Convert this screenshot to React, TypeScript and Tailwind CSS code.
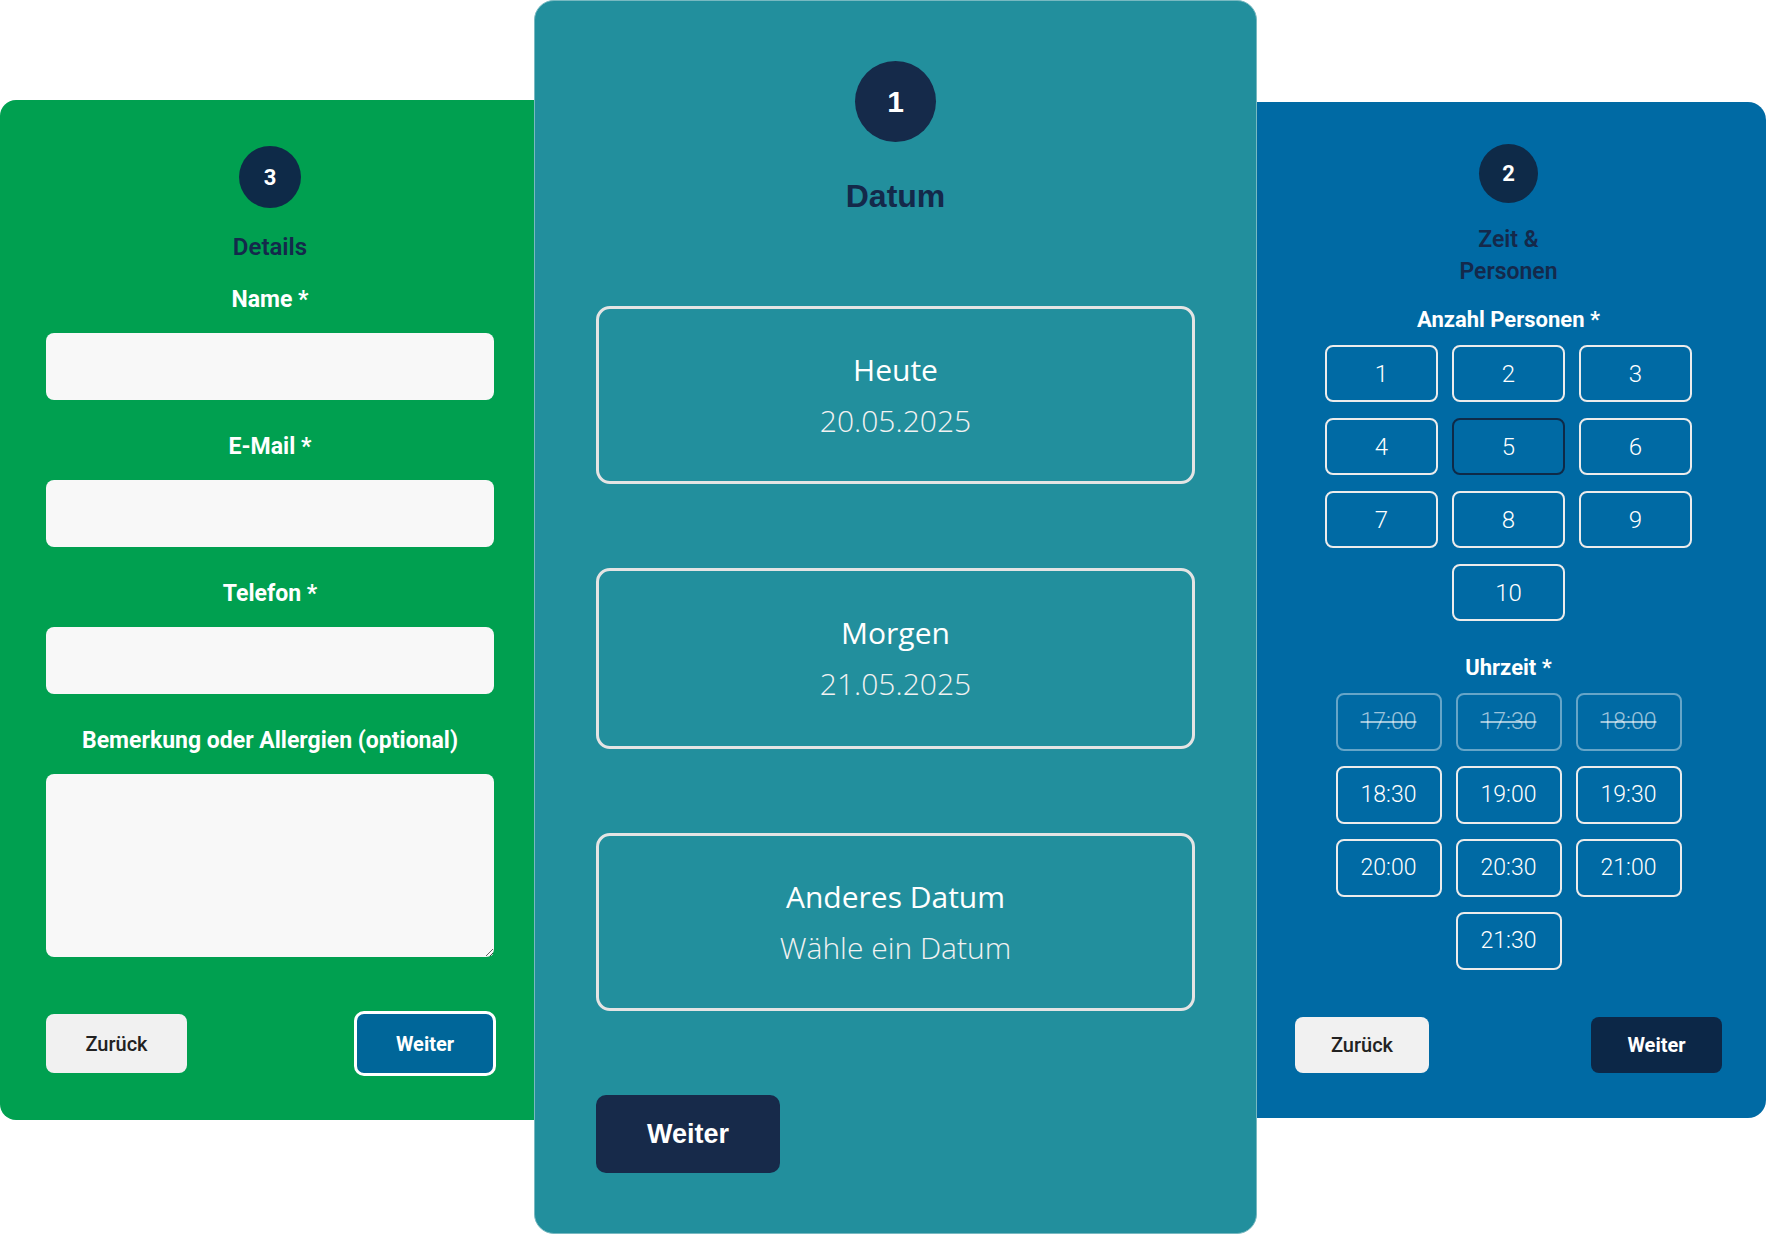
import React from 'react';

const roboto = { fontFamily: 'Roboto, "Liberation Sans", sans-serif' };

const people = [1, 2, 3, 4, 5, 6, 7, 8, 9, 10];
const times = [
  { t: '17:00', off: true },
  { t: '17:30', off: true },
  { t: '18:00', off: true },
  { t: '18:30' },
  { t: '19:00' },
  { t: '19:30' },
  { t: '20:00' },
  { t: '20:30' },
  { t: '21:00' },
  { t: '21:30' },
];

const Field = ({ label, area }: { label: string; area?: boolean }) => (
  <>
    <div className="mt-[33px] h-[28px] leading-[28px] text-[23px] font-bold text-white">{label}</div>
    {area ? (
      <textarea className="mt-[19px] h-[183px] w-full shrink-0 rounded-[8px] bg-[#f8f8f8] outline-none" />
    ) : (
      <input className="mt-[19px] h-[67px] w-full shrink-0 rounded-[8px] bg-[#f8f8f8] outline-none" />
    )}
  </>
);

const DetailsCard = () => (
  <div
    className="mt-[100px] flex h-[1020px] w-[540px] shrink-0 flex-col items-center rounded-l-[16px] bg-[#00a050] px-[46px]"
    style={roboto}
  >
    <div className="mt-[46px] flex h-[62px] w-[62px] items-center justify-center rounded-full bg-[#0e2a48] text-[22px] font-bold text-white">
      3
    </div>
    <div className="mt-[24px] h-[30px] leading-[30px] text-[24px] font-semibold text-[#14294b]">Details</div>
    <div className="-mt-[9px]" />
    <Field label="Name *" />
    <Field label="E-Mail *" />
    <Field label="Telefon *" />
    <Field label="Bemerkung oder Allergien (optional)" area />
    <div className="mt-[54px] flex w-full items-center justify-between pr-[1px]">
      <button className="h-[59px] w-[141px] rounded-[8px] bg-[#f1f1f1] text-[20px] font-medium text-[#222]">
        Zurück
      </button>
      <button className="-mr-[3px] h-[65px] w-[142px] rounded-[10px] border-[3px] border-white bg-[#006699] text-[20px] font-bold text-white">
        Weiter
      </button>
    </div>
  </div>
);

const DateOption = ({ title, sub, tall }: { title: string; sub: string; tall?: boolean }) => (
  <button
    className={`flex w-full shrink-0 flex-col items-center justify-center gap-[11px] rounded-[14px] border-[3px] border-[#e4e4e4] ${
      tall ? 'h-[181px]' : 'h-[178px]'
    }`}
    style={{ fontFamily: '"Open Sans", "Noto Sans", sans-serif' }}
  >
    <span className="leading-[40px] text-[30px] text-white">{title}</span>
    <span className="leading-[40px] text-[30px] font-light text-[#f2f2f2]">{sub}</span>
  </button>
);

const DateCard = () => (
  <div
    className="relative z-10 -ml-[6px] flex h-[1234px] w-[723px] shrink-0 flex-col rounded-[20px] border border-[#78b9c1] bg-[#228f9d] px-[61px]"
    style={{ fontFamily: '"Liberation Sans", Arial, sans-serif' }}
  >
    <div className="mx-auto mt-[60px] flex h-[81px] w-[81px] items-center justify-center rounded-full bg-[#152a4a] text-[30px] font-bold text-white">
      1
    </div>
    <div className="mt-[36px] h-[36px] text-center leading-[36px] text-[32px] font-bold text-[#14294a]">Datum</div>
    <div className="mt-[92px] flex flex-col gap-[84px]">
      <DateOption title="Heute" sub="20.05.2025" />
      <DateOption title="Morgen" sub="21.05.2025" tall />
      <DateOption title="Anderes Datum" sub="Wähle ein Datum" />
    </div>
    <button className="mt-[84px] h-[78px] w-[184px] rounded-[10px] bg-[#172a4a] text-[27px] font-bold text-white">
      Weiter
    </button>
  </div>
);

const TimeCard = () => (
  <div
    className="-ml-[6px] mt-[102px] flex h-[1016px] w-[515px] shrink-0 flex-col items-center rounded-r-[18px] bg-[#006aa4] px-[44px]"
    style={roboto}
  >
    <div className="mt-[42px] flex h-[59px] w-[59px] items-center justify-center rounded-full bg-[#0e2a48] text-[22px] font-bold text-white">
      2
    </div>
    <div className="mt-[21px] w-[120px] text-center leading-[32px] text-[23px] font-semibold text-[#14294b]">
      Zeit & Personen
    </div>
    <div className="mt-[18px] h-[28px] leading-[28px] text-[22px] font-bold text-white">Anzahl Personen *</div>
    <div className="mt-[11px] grid grid-cols-[113px_113px_113px] gap-x-[14px] gap-y-[16px]">
      {people.map((n) => (
        <button
          key={n}
          className={`h-[57px] rounded-[8px] border-2 text-[24px] font-light text-white ${
            n === 5 ? 'border-[#0e2a48]' : 'border-[#ececec]'
          } ${n === 10 ? 'col-start-2' : ''}`}
        >
          {n}
        </button>
      ))}
    </div>
    <div className="mt-[33px] h-[28px] leading-[28px] text-[22px] font-bold text-white">Uhrzeit *</div>
    <div className="mt-[11px] grid grid-cols-[106px_106px_106px] gap-x-[14px] gap-y-[15px]">
      {times.map((s, i) => (
        <button
          key={s.t}
          className={`h-[58px] rounded-[8px] border-2 text-[23px] font-light ${
            s.off ? 'border-white/40 text-white/60 line-through' : 'border-[#ececec] text-white'
          } ${i === 9 ? 'col-start-2' : ''}`}
        >
          {s.t}
        </button>
      ))}
    </div>
    <div className="mt-[47px] flex w-full items-center justify-between">
      <button className="h-[56px] w-[134px] rounded-[8px] bg-[#f1f1f1] text-[20px] font-medium text-[#222]">
        Zurück
      </button>
      <button className="h-[56px] w-[131px] rounded-[8px] bg-[#0c2747] text-[20px] font-bold text-white">
        Weiter
      </button>
    </div>
  </div>
);

export default function App() {
  return (
    <div className="flex h-[1236px] w-[1766px] items-start overflow-hidden bg-white">
      <DetailsCard />
      <DateCard />
      <TimeCard />
    </div>
  );
}
